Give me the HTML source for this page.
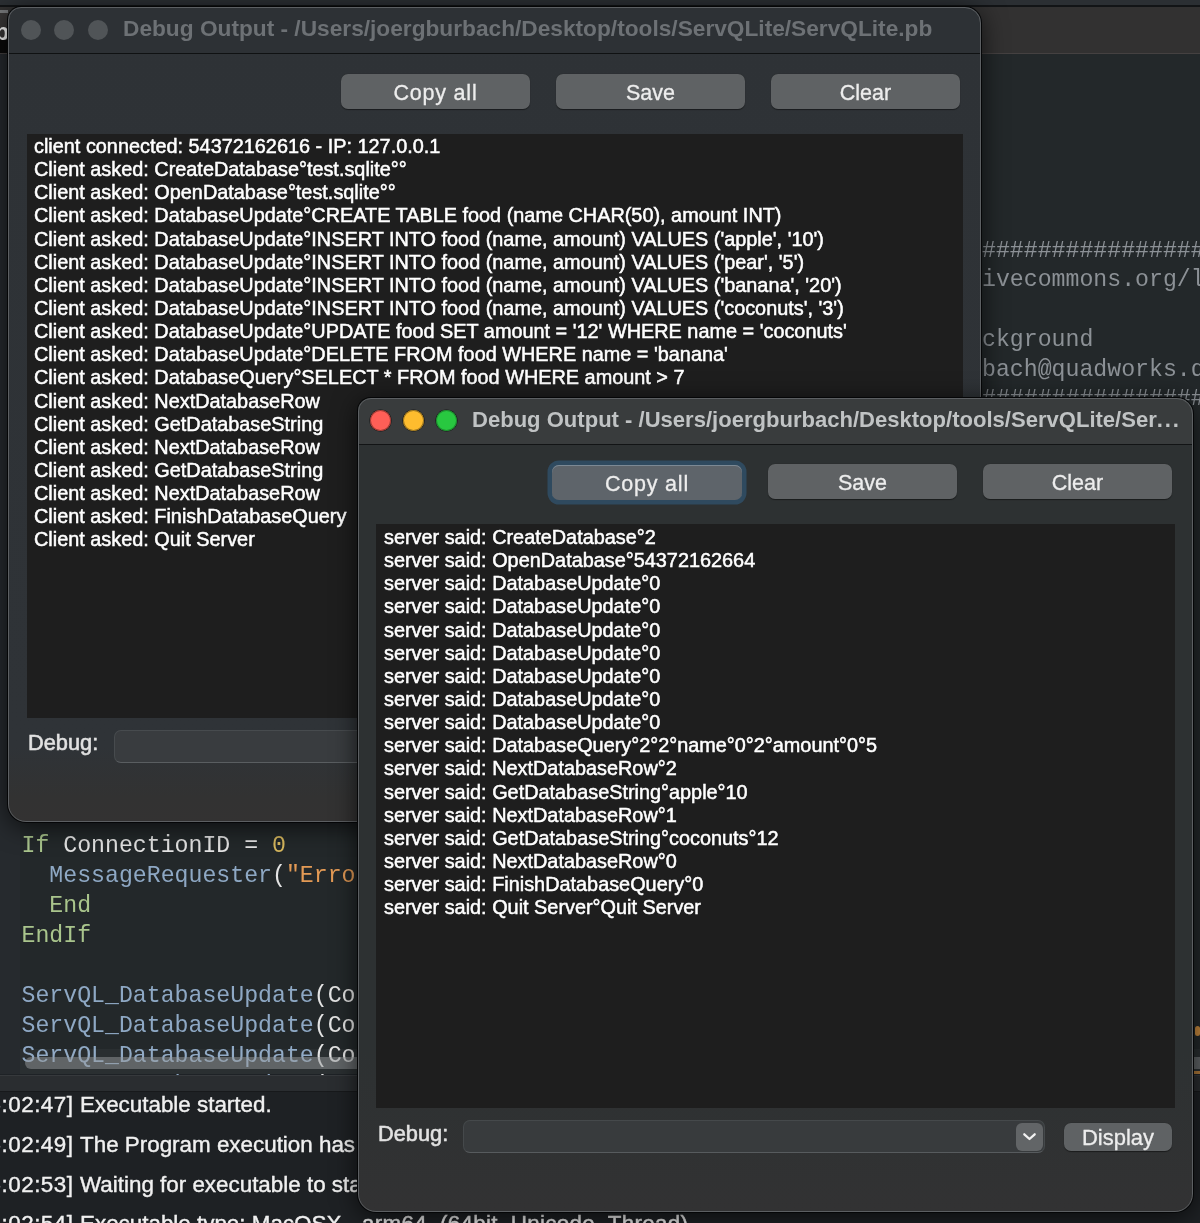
<!DOCTYPE html>
<html><head><meta charset="utf-8">
<style>
*{margin:0;padding:0;box-sizing:border-box}
html,body{width:1200px;height:1223px;overflow:hidden;}
body{will-change:transform;background:#1e2226;font-family:"Liberation Sans",sans-serif}
.abs{position:absolute}
.mono{font-family:"Liberation Mono",monospace;font-size:23.2px;white-space:pre}
.win{position:absolute;z-index:1;border-radius:13px 16px 18px 18px;overflow:hidden;box-shadow:0 0 0 1px #050607,0 4px 26px rgba(0,0,0,0.7)}
.win .frame{position:absolute;inset:0;border-radius:13px 16px 18px 18px;border:1px solid #5c5f62;pointer-events:none;z-index:10}
.title{position:absolute;left:0;right:0;top:0;font-weight:bold;font-size:22.7px;white-space:nowrap}
.tl{position:absolute;width:21px;height:21px;border-radius:50%;box-shadow:0 0 0 0.5px rgba(0,0,0,0.5)}
.btn{position:absolute;height:35px;border-radius:7px;background:#5f6264;color:#ededed;font-size:21.5px;text-align:center;line-height:39px;-webkit-text-stroke:0.3px #ededed;box-shadow:0 0.5px 1px rgba(0,0,0,0.45)}
.ta{position:absolute;background:#1e1e1e;color:#fff;font-size:19.86px;white-space:pre;-webkit-text-stroke:0.5px #fff}
.ta div{height:23.15px;line-height:23.15px}
.lbl{position:absolute;color:#e2e2e2;font-size:21.8px;-webkit-text-stroke:0.55px #e2e2e2}
</style></head><body>

<!-- IDE background -->
<div class="abs" style="left:0;top:0;width:1200px;height:5px;background:#2b2f33"></div>
<div class="abs" style="left:0;top:5px;width:1200px;height:2px;background:#121416"></div>
<div class="abs" style="left:0;top:7px;width:1200px;height:46px;background:#323131"></div>
<div class="abs" style="left:0;top:53px;width:1200px;height:1px;background:#454141"></div>
<div class="abs" style="left:0;top:10px;width:8px;height:3px;background:#77797b"></div>
<div class="abs" style="left:0;top:13px;width:8px;height:29px;background:#383636"></div>
<div class="abs" style="left:0;top:40px;width:8px;height:13px;background:#0b0b0b"></div>
<div class="abs" style="left:-5px;top:20px;font-weight:bold;font-size:23px;color:#fff;line-height:24px">p</div>
<div class="abs" style="left:0;top:54px;width:1200px;height:1020px;background:#23282a"></div>
<div class="abs" style="left:0;top:54px;width:20px;height:1020px;background:#262a2e"></div>

<!-- top-right code -->
<div class="abs mono" style="left:982px;top:236.5px;line-height:29.8px;color:#8c9196">################
ivecommons.org/l

ckground
bach@quadworks.d
################</div>

<!-- bottom-left code -->
<div class="abs mono" style="left:21.5px;top:831px;line-height:30px;color:#e4e4e4"><span style="color:#a9c58c">If</span> ConnectionID = <span style="color:#d9b95e">0</span>
  <span style="color:#8ea8c4">MessageRequester</span>(<span style="color:#e39a55">"Erro</span>
  <span style="color:#a9c58c">End</span>
<span style="color:#a9c58c">EndIf</span>

<span style="color:#8ea8c4">ServQL_DatabaseUpdate</span>(Co
<span style="color:#8ea8c4">ServQL_DatabaseUpdate</span>(Co
<span style="color:#8ea8c4">ServQL_DatabaseUpdate</span>(Co
<span style="color:#8ea8c4">ServQL_DatabaseUpdate</span>(Co</div>
<div class="abs" style="left:20px;top:1049px;width:1180px;height:25px;background:rgba(255,255,255,0.035)"></div>
<div class="abs" style="left:25px;top:1056.5px;width:1200px;height:12.5px;border-radius:6px;background:rgba(150,153,156,0.5)"></div>
<div class="abs" style="left:1195px;top:1026px;width:5px;height:10px;border-radius:3px;background:#c98a3e"></div>
<div class="abs" style="left:1194px;top:1071px;width:6px;height:3px;background:#b07a3a"></div>

<!-- bottom output panel -->
<div class="abs" style="left:0;top:1075px;width:1200px;height:1px;background:#36393c"></div>
<div class="abs" style="left:0;top:1076px;width:1200px;height:15px;background:#2a2d30"></div>
<div class="abs" style="left:0;top:1091px;width:1200px;height:1px;background:#17191b"></div>
<div class="abs" style="left:0;top:1092px;width:1200px;height:131px;background:#1e2124"></div>
<div class="abs" style="left:0;top:1091px;width:1200px;height:132px;color:#f0f0f0;font-size:22.4px;white-space:pre;line-height:26px;-webkit-text-stroke:0.4px #f0f0f0">
<div style="position:absolute;top:1px;right:1126.5px;letter-spacing:0.5px">[15:02:47]</div><div style="position:absolute;top:1px;left:80px">Executable started.</div>
<div style="position:absolute;top:40.8px;right:1126.5px;letter-spacing:0.5px">[15:02:49]</div><div style="position:absolute;top:40.8px;left:80px">The Program execution has finished.</div>
<div style="position:absolute;top:80.5px;right:1126.5px;letter-spacing:0.5px">[15:02:53]</div><div style="position:absolute;top:80.5px;left:80px">Waiting for executable to start...</div>
<div style="position:absolute;top:120.2px;right:1126.5px;letter-spacing:0.5px">[15:02:54]</div><div style="position:absolute;top:120.2px;left:80px">Executable type: MacOSX -</div><div style="position:absolute;top:120.2px;left:362px;letter-spacing:0.3px">arm64  (64bit, Unicode, Thread)</div>
</div>

<!-- WINDOW 1 -->
<div class="win" id="w1" style="left:8px;top:7px;width:973px;height:815px;background:linear-gradient(#2e3236 0,#2f3337 740px,#323232 790px,#333232 815px)">
  <div class="abs" style="left:0;top:0;width:973px;height:46px;background:#2d3135"></div>
  <div class="abs" style="left:0;top:46px;width:973px;height:1px;background:#0f1112"></div>
  <div class="tl" style="left:13px;top:12.6px;width:20px;height:20px;background:#505457;box-shadow:none"></div>
  <div class="tl" style="left:46.3px;top:12.6px;width:20px;height:20px;background:#505457;box-shadow:none"></div>
  <div class="tl" style="left:79.6px;top:12.6px;width:20px;height:20px;background:#505457;box-shadow:none"></div>
  <div class="title" style="left:115px;top:8px;color:#6d7175">Debug Output - /Users/joergburbach/Desktop/tools/ServQLite/ServQLite.pb</div>
  <div class="btn" style="left:333px;top:67px;width:189px;letter-spacing:0.8px">Copy all</div>
  <div class="btn" style="left:548px;top:67px;width:189px">Save</div>
  <div class="btn" style="left:763px;top:67px;width:189px">Clear</div>
  <div class="ta" style="left:19px;top:127px;width:936px;height:584px;padding:1px 0 0 7px"><div>client connected: 54372162616 - IP: 127.0.0.1</div><div>Client asked: CreateDatabase°test.sqlite°°</div><div>Client asked: OpenDatabase°test.sqlite°°</div><div>Client asked: DatabaseUpdate°CREATE TABLE food (name CHAR(50), amount INT)</div><div>Client asked: DatabaseUpdate°INSERT INTO food (name, amount) VALUES ('apple', '10')</div><div>Client asked: DatabaseUpdate°INSERT INTO food (name, amount) VALUES ('pear', '5')</div><div>Client asked: DatabaseUpdate°INSERT INTO food (name, amount) VALUES ('banana', '20')</div><div>Client asked: DatabaseUpdate°INSERT INTO food (name, amount) VALUES ('coconuts', '3')</div><div>Client asked: DatabaseUpdate°UPDATE food SET amount = '12' WHERE name = 'coconuts'</div><div>Client asked: DatabaseUpdate°DELETE FROM food WHERE name = 'banana'</div><div>Client asked: DatabaseQuery°SELECT * FROM food WHERE amount &gt; 7</div><div>Client asked: NextDatabaseRow</div><div>Client asked: GetDatabaseString</div><div>Client asked: NextDatabaseRow</div><div>Client asked: GetDatabaseString</div><div>Client asked: NextDatabaseRow</div><div>Client asked: FinishDatabaseQuery</div><div>Client asked: Quit Server</div></div>
  <div class="lbl" style="left:20px;top:723px">Debug:</div>
  <div class="abs" style="left:106px;top:723px;width:880px;height:33px;border-radius:7px;background:#393c3f;border:1px solid #474b4e;border-bottom:1.5px solid #5a5e61"></div>
  <div class="frame"></div>
</div>

<!-- WINDOW 2 -->
<div class="win" id="w2" style="z-index:2;left:358px;top:398px;width:835px;height:814px;background:linear-gradient(#2d3132 0,#2d3132 650px,#323233 814px)">
  <div class="abs" style="left:0;top:0;width:835px;height:46px;background:#393c3d"></div>
  <div class="abs" style="left:0;top:46px;width:835px;height:1px;background:#121415"></div>
  <div class="tl" style="left:11.5px;top:11.5px;background:#fe5f57;box-shadow:inset 0 0 0 1px #9a3a33,0 0 0 0.6px rgba(0,0,0,0.6)"></div>
  <div class="tl" style="left:44.5px;top:11.5px;background:#febc2e;box-shadow:inset 0 0 0 1px #9a7420,0 0 0 0.6px rgba(0,0,0,0.6)"></div>
  <div class="tl" style="left:77.5px;top:11.5px;background:#28c840;box-shadow:inset 0 0 0 1px #1d8a2e,0 0 0 0.6px rgba(0,0,0,0.6)"></div>
  <div class="title" style="left:114px;top:9px;font-size:22.05px;color:#c0c3c4">Debug Output - /Users/joergburbach/Desktop/tools/ServQLite/Ser<span style="letter-spacing:1.8px">...</span></div>
  <div class="btn" style="left:194px;top:67px;width:190px;box-shadow:0 0 0 4.5px #2f4a5f,inset 0 1px 0 #7c8994;background:#5e646a;letter-spacing:0.8px">Copy all</div>
  <div class="btn" style="left:410px;top:66px;width:189px">Save</div>
  <div class="btn" style="left:625px;top:66px;width:189px">Clear</div>
  <div class="ta" style="left:18px;top:126px;width:799px;height:584px;padding:2px 0 0 8px"><div>server said: CreateDatabase°2</div><div>server said: OpenDatabase°54372162664</div><div>server said: DatabaseUpdate°0</div><div>server said: DatabaseUpdate°0</div><div>server said: DatabaseUpdate°0</div><div>server said: DatabaseUpdate°0</div><div>server said: DatabaseUpdate°0</div><div>server said: DatabaseUpdate°0</div><div>server said: DatabaseUpdate°0</div><div>server said: DatabaseQuery°2°2°name°0°2°amount°0°5</div><div>server said: NextDatabaseRow°2</div><div>server said: GetDatabaseString°apple°10</div><div>server said: NextDatabaseRow°1</div><div>server said: GetDatabaseString°coconuts°12</div><div>server said: NextDatabaseRow°0</div><div>server said: FinishDatabaseQuery°0</div><div>server said: Quit Server°Quit Server</div></div>
  <div class="lbl" style="left:20px;top:723px">Debug:</div>
  <div class="abs" style="left:105px;top:722px;width:582px;height:33px;border-radius:7px;background:#383b3d;border:1px solid #45494b;border-bottom:1.5px solid #575b5e"></div>
  <div class="abs" style="left:658px;top:725px;width:27px;height:27.5px;border-radius:6px;background:#626567"><svg width="27" height="27" style="position:absolute;left:0;top:0"><path d="M8.3 11.3 L13.5 16 L18.7 11.3" stroke="#f2f2f2" stroke-width="2.3" fill="none" stroke-linecap="round" stroke-linejoin="round"/></svg></div>
  <div class="btn" style="left:706px;top:724.5px;width:108px;height:28.5px;line-height:30px;font-size:22px">Display</div>
  <div class="frame"></div>
</div>

</body></html>
